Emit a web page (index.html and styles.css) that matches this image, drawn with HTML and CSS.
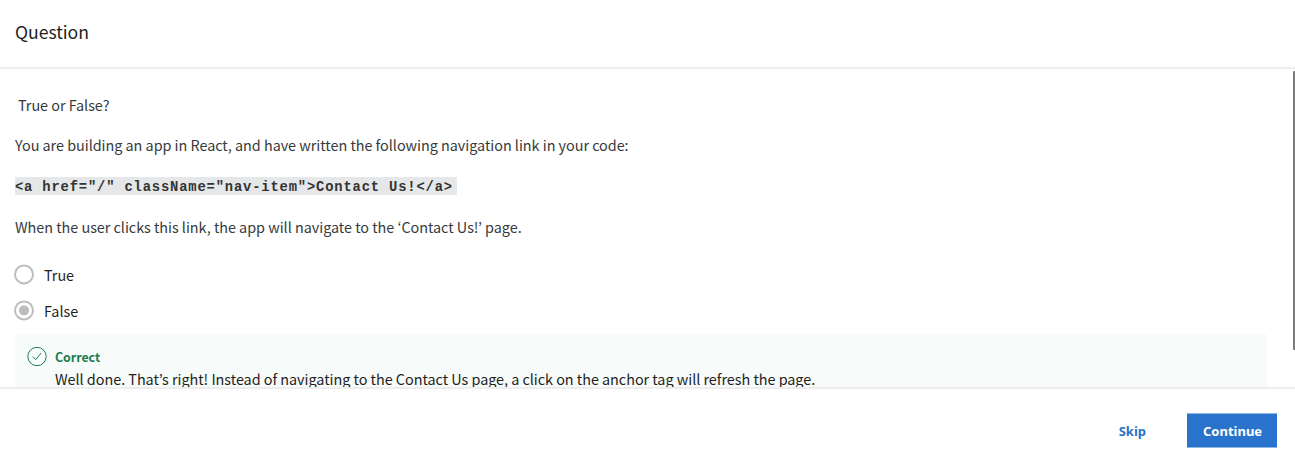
FILE: index.html
```
<!DOCTYPE html>
<html lang="en">
<head>
<meta charset="utf-8">
<title>Question</title>
<link rel="stylesheet" href="styles.css">
</head>
<body>
<div class="page">
  <header class="header"><h1 class="title">Question</h1></header>
  <main class="content">
    <div class="prompt">
      <p class="lead">True or False?</p>
      <p class="text intro">You are building an app in React, and have written the following navigation link in your code:</p>
      <p class="code-line"><code class="code">&lt;a href="/" className="nav-item"&gt;Contact Us!&lt;/a&gt;</code></p>
      <p class="text statement">When the user clicks this link, the app will navigate to the ‘Contact Us!’ page.</p>
    </div>
    <div class="options">
      <div class="option"><span class="radio"></span><span class="label">True</span></div>
      <div class="option"><span class="radio checked"></span><span class="label">False</span></div>
    </div>
    <section class="feedback">
      <svg class="check" width="20" height="20" viewBox="0 0 20 20" fill="none" stroke="#1d7c50"><circle cx="10" cy="10.5" r="9.2"/><path d="M5.7 10.5l3 3.1 5.5-6.6"/></svg>
      <div class="feedback-body">
        <strong class="verdict">Correct</strong>
        <p class="explanation">Well done. That’s right! Instead of navigating to the Contact Us page, a click on the anchor tag will refresh the page.</p>
      </div>
    </section>
    <div class="scrollbar"></div>
  </main>
  <footer class="footer">
    <button class="skip">Skip</button>
    <button class="continue">Continue</button>
  </footer>
</div>
</body>
</html>
```
FILE: styles.css
```
* { box-sizing: border-box; }
body { margin: 0; background: #fff; color: #373a3c; font-family: "Noto Sans CJK KR", "Noto Sans", sans-serif; font-size: 14.4px; letter-spacing: -0.03px; }
h1, p { margin: 0; font-weight: 400; }
.page { height: 460px; display: flex; flex-direction: column; overflow: hidden; }
.header { height: 69px; flex: none; padding: 20px 15px 0; border-bottom: 2px solid #ededed; }
.title { font-size: 17.6px; line-height: 24px; color: #1f1f1f; }
.content { position: relative; height: 318px; flex: none; padding: 24px 28px 0 15px; overflow: hidden; }
.prompt { white-space: nowrap; }
.lead, .text { line-height: 24px; width: max-content; }
.lead { margin-left: 3px; }
.intro { margin-top: 16px; }
.code-line { height: 18px; margin-top: 20px; display: flex; }
.code { height: 18px; background: #e5e7e8; color: #333; font: bold 13.8px/22px "Liberation Mono", monospace; letter-spacing: 0.845px; padding-right: 4px; }
.statement { margin-top: 20px; }
.options { margin-top: 24px; color: #1f1f1f; }
.option { height: 24px; display: flex; gap: 10px; margin-left: -1px; }
.option + .option { margin-top: 12px; }
.label { line-height: 24px; }
.radio { width: 20px; height: 20px; margin-top: 1px; border: 2px solid #bdbdbd; border-radius: 50%; transform: translateY(0.4px); }
.checked { background: radial-gradient(circle, #bdbdbd 4.7px, transparent 5.3px); }
.feedback { height: 80px; margin-top: 11px; padding: 12px 12px; display: flex; gap: 8px; background: #f7fbf9; color: #1f1f1f; }
.check { flex: none; overflow: visible; }
.verdict { display: block; font-size: 12.4px; line-height: 22px; color: #1d7c50; }
.explanation { line-height: 22px; white-space: nowrap; width: max-content; }
.scrollbar { position: absolute; right: 0; top: 2px; width: 2px; height: 279px; background: #7b7b7b; border-radius: 1px 0 0 1px; }
.footer { flex: 1; border-top: 2px solid #ededed; padding: 24px 18px 0 0; display: flex; justify-content: flex-end; gap: 25px; }
.footer button { height: 35px; padding: 0 16px; border: 0 solid #8fb5e4; background: none; color: #2a73cc; font: bold 13px/34px "Noto Sans", sans-serif; }
.footer .skip { padding-top: 1px; }
.footer .continue { width: 90px; border-width: 1px 0; padding-top: 1px; line-height: 32px; background: #2a73cc; color: #fff; }
```
